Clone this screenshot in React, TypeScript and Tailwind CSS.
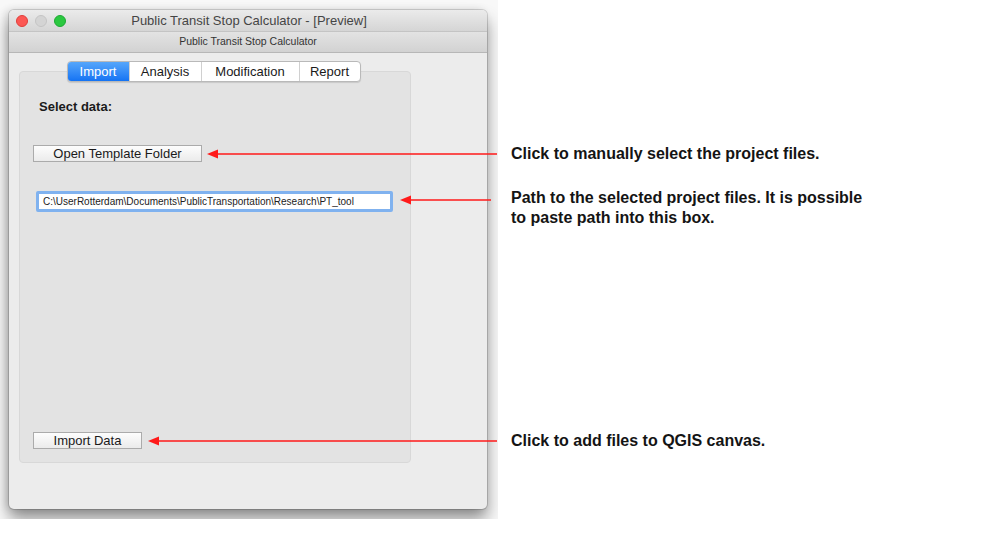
const tabs = [
  { label: 'Import', w: 'w-[61px]', active: true },
  { label: 'Analysis', w: 'w-[72px]' },
  { label: 'Modification', w: 'w-[98px]' },
  { label: 'Report', w: 'w-[61px]' },
]

const sans = { fontFamily: '"Liberation Sans", Arial, sans-serif' }

function MacButton({ label, width }: { label: string; width: string }) {
  return (
    <button
      className={`block ${width} h-[17px] border border-[#ababab] bg-gradient-to-b from-[#fdfdfd] to-[#ebebeb] text-[13px] leading-[15px] text-[#1a1a1a] text-center`}
    >
      {label}
    </button>
  )
}

function Arrow({ y, x1, x2 }: { y: number; x1: number; x2: number }) {
  return (
    <g>
      <line x1={x1 + 8} y1={y} x2={x2} y2={y} stroke="#ff1a1a" strokeWidth="1.6" />
      <polygon points={`${x1},${y} ${x1 + 11},${y - 4.5} ${x1 + 11},${y + 4.5}`} fill="#ff1a1a" />
    </g>
  )
}

export default function App() {
  return (
    <div className="relative w-[1000px] h-[538px] bg-white flex overflow-hidden" style={sans}>
      {/* Window screenshot */}
      <div className="w-[498px] h-[519px] overflow-hidden pt-[10px] pl-[9px] bg-[#f8f8f8]">
        <div className="w-[478px] h-[499px] rounded-[5px] bg-[#ececec] flex flex-col overflow-hidden shadow-[0_0_0_1px_rgba(0,0,0,0.14),0_10px_16px_rgba(0,0,0,0.42),-3px_0_8px_rgba(0,0,0,0.12)]">
          {/* Title bar */}
          <div className="relative h-[22px] flex items-center bg-gradient-to-b from-[#ebebeb] to-[#d5d5d5] border-b border-[#c4c4c4]">
            <div className="flex items-center gap-[7px] pl-[7px]">
              <span className="w-[12px] h-[12px] rounded-full bg-[#fc5753] border border-[#df3e3a]" />
              <span className="w-[12px] h-[12px] rounded-full bg-[#d4d4d4] border border-[#c4c4c4]" />
              <span className="w-[12px] h-[12px] rounded-full bg-[#2bc840] border border-[#1ea934]" />
            </div>
            <div className="absolute inset-0 flex items-center justify-center text-[13px] text-[#454545] pl-[2px]">
              Public Transit Stop Calculator - [Preview]
            </div>
          </div>
          {/* Sub title bar */}
          <div className="h-[21px] flex items-center justify-center bg-gradient-to-b from-[#e3e3e3] to-[#d2d2d2] border-b border-[#b7b7b7] text-[10.5px] text-[#333]">
            Public Transit Stop Calculator
          </div>
          {/* Content */}
          <div className="pt-[8px] pl-[10px]">
            <div className="w-[392px] relative">
              <div className="relative z-10 flex justify-center">
                <div className="flex h-[21px] rounded-[4px] border border-[#b9b9b9] bg-white overflow-hidden shadow-[0_1px_1px_rgba(0,0,0,0.12)] mr-[3px]">
                  {tabs.map((t, i) => (
                    <div
                      key={t.label}
                      className={`${t.w} flex items-center justify-center text-[13px] ${
                        t.active
                          ? 'bg-gradient-to-b from-[#55a6fb] to-[#1373f3] text-white'
                          : 'text-[#1a1a1a]'
                      } ${i > 0 ? 'border-l border-[#d0d0d0]' : ''}`}
                    >
                      {t.label}
                    </div>
                  ))}
                </div>
              </div>
              <div className="-mt-[11px] h-[392px] rounded-[4px] bg-[#e3e3e3] border border-[#d8d8d8] flex flex-col pl-[13px] pt-[27px] pb-[13px]">
                <div className="ml-[6px] text-[13px] leading-[16px] font-bold text-[#1a1a1a]">Select data:</div>
                <div className="mt-[30px]">
                  <MacButton label="Open Template Folder" width="w-[169px]" />
                </div>
                <div className="mt-[29px] ml-[3px] w-[357px] h-[21px] rounded-[2px] border-[3px] border-[#80b2ef] bg-white flex items-center pl-[4px] text-[10px] text-[#222]">
                  C:\UserRotterdam\Documents\PublicTransportation\Research\PT_tool
                </div>
                <div className="mt-auto">
                  <MacButton label="Import Data" width="w-[109px]" />
                </div>
              </div>
            </div>
          </div>
        </div>
      </div>

      {/* Annotations */}
      <div className="flex flex-col pl-[13px] pt-[144px] text-[16px] leading-[20px] font-bold text-[#141414]">
        <div>Click to manually select the project files.</div>
        <div className="mt-[24px]">
          Path to the selected project files. It is possible
          <br />
          to paste path into this box.
        </div>
        <div className="mt-[203px]">Click to add files to QGIS canvas.</div>
      </div>

      {/* Callout arrows */}
      <svg className="absolute inset-0 pointer-events-none" width="1000" height="538">
        <Arrow y={154} x1={207} x2={497} />
        <Arrow y={200} x1={400} x2={491} />
        <Arrow y={441} x1={148} x2={497} />
      </svg>
    </div>
  )
}
